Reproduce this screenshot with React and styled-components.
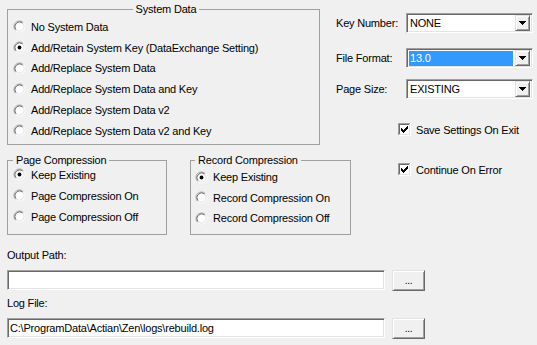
import React from 'react'
import styled, { createGlobalStyle } from 'styled-components'

const GlobalStyle = createGlobalStyle`
  html, body {
    margin: 0;
    padding: 0;
    background: #f0f0f0;
  }
  body {
    font-family: "Liberation Sans", Arial, sans-serif;
    font-size: 11px;
    letter-spacing: -0.2px;
    color: #000;
  }
`;

function RadioMark({ checked }) {
  return (
    <svg width="13" height="13" viewBox="0 0 13 13">
      <circle cx="6.5" cy="6.5" r="5" fill="#fff" />
      <path d="M2.61 10.39 A5.5 5.5 0 0 1 10.39 2.61" fill="none" stroke="#a0a0a0" />
      <path d="M10.39 2.61 A5.5 5.5 0 0 1 2.61 10.39" fill="none" stroke="#fff" />
      <path d="M3.32 9.68 A4.5 4.5 0 0 1 9.68 3.32" fill="none" stroke="#696969" />
      <path d="M9.68 3.32 A4.5 4.5 0 0 1 3.32 9.68" fill="none" stroke="#e3e3e3" />
      {checked && <circle cx="6.5" cy="6.5" r="1.9" fill="#000" />}
    </svg>
  )
}

function CheckMark() {
  return (
    <svg width="13" height="13" viewBox="0 0 13 13" shapeRendering="crispEdges">
      <rect x="0" y="0" width="13" height="13" fill="#fff" />
      <path d="M0.5 12 V0.5 H12" fill="none" stroke="#a0a0a0" />
      <path d="M1.5 11 V1.5 H11" fill="none" stroke="#696969" />
      <path d="M1 11.5 H11.5 V1" fill="none" stroke="#e3e3e3" />
      <path d="M0 12.5 H12.5 V0" fill="none" stroke="#fff" />
      <path
        d="M3 5h1v3h-1z M4 6h1v3h-1z M5 7h1v3h-1z M6 6h1v3h-1z M7 5h1v3h-1z M8 4h1v3h-1z M9 3h1v3h-1z"
        fill="#000"
      />
    </svg>
  )
}

function DropArrow() {
  return (
    <svg width="7" height="4" viewBox="0 0 7 4" shapeRendering="crispEdges">
      <path d="M0 0h7v1h-7z M1 1h5v1h-5z M2 2h3v1h-3z M3 3h1v1h-1z" fill="#000" />
    </svg>
  )
}

const systemOptions = [
  'No System Data',
  'Add/Retain System Key (DataExchange Setting)',
  'Add/Replace System Data',
  'Add/Replace System Data and Key',
  'Add/Replace System Data v2',
  'Add/Replace System Data v2 and Key',
];

const pageOptions = ['Keep Existing', 'Page Compression On', 'Page Compression Off'];
const recordOptions = ['Keep Existing', 'Record Compression On', 'Record Compression Off'];

function App() {
  return (
    <Dialog>
      <GlobalStyle />
      <Top>
        <LeftCol>
          <Group $top={4} $w={313} $h={141}>
            <Legend $center>System Data</Legend>
            <Options $shift={1.5}>
              {systemOptions.map((o, i) => (
                <Option key={o} $h={20.8}>
                  <RadioMark checked={i === 1} />
                  {o}
                </Option>
              ))}
            </Options>
          </Group>
          <CompressionRow>
            <Group $top={0} $w={160} $h={80}>
              <Legend>Page Compression</Legend>
              <Options $shift={-2}>
                {pageOptions.map((o, i) => (
                  <Option key={o} $h={21}>
                    <RadioMark checked={i === 0} />
                    {o}
                  </Option>
                ))}
              </Options>
            </Group>
            <Group $top={0} $w={161} $h={80} $inset={4}>
              <Legend>Record Compression</Legend>
              <Options $shift={1}>
                {recordOptions.map((o, i) => (
                  <Option key={o} $h={20.5}>
                    <RadioMark checked={i === 0} />
                    {o}
                  </Option>
                ))}
              </Options>
            </Group>
          </CompressionRow>
        </LeftCol>
        <RightCol>
          <FieldRow $gap={15}>
            <FieldLabel>Key Number:</FieldLabel>
            <Combo>
              <ComboValue>NONE</ComboValue>
              <ComboButton><DropArrow /></ComboButton>
            </Combo>
          </FieldRow>
          <FieldRow $gap={11}>
            <FieldLabel>File Format:</FieldLabel>
            <Combo>
              <ComboValue $selected>13.0</ComboValue>
              <ComboButton><DropArrow /></ComboButton>
            </Combo>
          </FieldRow>
          <FieldRow $gap={24}>
            <FieldLabel>Page Size:</FieldLabel>
            <Combo>
              <ComboValue>EXISTING</ComboValue>
              <ComboButton><DropArrow /></ComboButton>
            </Combo>
          </FieldRow>
          <CheckRow $gap={27}>
            <CheckMark />
            Save Settings On Exit
          </CheckRow>
          <CheckRow>
            <CheckMark />
            Continue On Error
          </CheckRow>
        </RightCol>
      </Top>
      <PathLabel $top={13}>Output Path:</PathLabel>
      <PathRow>
        <Edit />
        <BrowseButton>...</BrowseButton>
      </PathRow>
      <PathLabel $top={5}>Log File:</PathLabel>
      <PathRow>
        <Edit>C:\ProgramData\Actian\Zen\logs\rebuild.log</Edit>
        <BrowseButton>...</BrowseButton>
      </PathRow>
    </Dialog>
  )
}

const Dialog = styled.div`
    width: 537px;
    height: 345px;
    box-sizing: border-box;
    padding-left: 7px;
    overflow: hidden;
    background: #f0f0f0;
`;
const Top = styled.div`
    display: flex;
    align-items: flex-start;
`;
const LeftCol = styled.div`
    width: 329px;
    flex-shrink: 0;
`;
const RightCol = styled.div`
    flex: 1;
    padding-top: 13px;
`;
const Group = styled.fieldset`
    margin: ${p => p.$top}px 0 0;
    padding: 0 0 0 ${p => p.$inset ?? 5}px;
    width: ${p => p.$w}px;
    height: ${p => p.$h}px;
    box-sizing: border-box;
    border: 1px solid #a0a0a0;
    min-width: 0;
    flex-shrink: 0;
`;
const Legend = styled.legend`
    padding: 0 3px;
    line-height: 11px;
    margin-left: ${p => (p.$center ? 'auto' : '0')};
    margin-right: ${p => (p.$center ? 'auto' : '0')};
`;
const Options = styled.div`
    display: flex;
    flex-direction: column;
    margin-top: ${p => p.$shift}px;
`;
const Option = styled.label`
    display: flex;
    align-items: center;
    gap: 5px;
    height: ${p => p.$h}px;
    white-space: nowrap;
    svg { flex-shrink: 0; }
`;
const CompressionRow = styled.div`
    display: flex;
    gap: 23px;
    margin-top: 10px;
`;
const FieldRow = styled.div`
    display: grid;
    grid-template-columns: 70px 127px;
    align-items: center;
    height: 20px;
    margin-bottom: ${p => p.$gap}px;
`;
const FieldLabel = styled.span`
    white-space: nowrap;
`;
const sunken = `
    box-sizing: border-box;
    background: #fff;
    border: 1px solid;
    border-color: #a0a0a0 #fff #fff #a0a0a0;
    box-shadow: inset 1px 1px #696969, inset -1px -1px #e3e3e3;
`;
const Combo = styled.div`
    ${sunken}
    height: 20px;
    padding: 2px;
    display: flex;
    gap: 2px;
`;
const ComboValue = styled.div`
    flex: 1;
    padding-left: 1px;
    line-height: 15px;
    height: 15px;
    background: ${p => (p.$selected ? '#3399ff' : 'transparent')};
    color: ${p => (p.$selected ? '#fff' : '#000')};
`;
const raised = `
    box-sizing: border-box;
    background: #f0f0f0;
    border: 1px solid;
    border-color: #e3e3e3 #696969 #696969 #e3e3e3;
    box-shadow: inset 1px 1px #fff, inset -1px -1px #a0a0a0;
`;
const ComboButton = styled.div`
    ${raised}
    width: 15px;
    height: 16px;
    margin-top: -1px;
    display: flex;
    align-items: center;
    justify-content: center;
`;
const CheckRow = styled.label`
    display: flex;
    align-items: center;
    gap: 5px;
    height: 13px;
    margin-left: 62px;
    margin-bottom: ${p => p.$gap ?? 0}px;
    white-space: nowrap;
`;
const PathLabel = styled.div`
    line-height: 14px;
    margin-top: ${p => p.$top}px;
    margin-bottom: 8px;
`;
const PathRow = styled.div`
    display: flex;
    align-items: flex-start;
    gap: 7px;
`;
const Edit = styled.div`
    ${sunken}
    width: 378px;
    height: 20px;
    padding-left: 2px;
    line-height: 18px;
    white-space: nowrap;
`;
const BrowseButton = styled.div`
    ${raised}
    width: 33px;
    height: 21px;
    line-height: 19px;
    text-align: center;
    font-size: 10px;
`;

export default App
